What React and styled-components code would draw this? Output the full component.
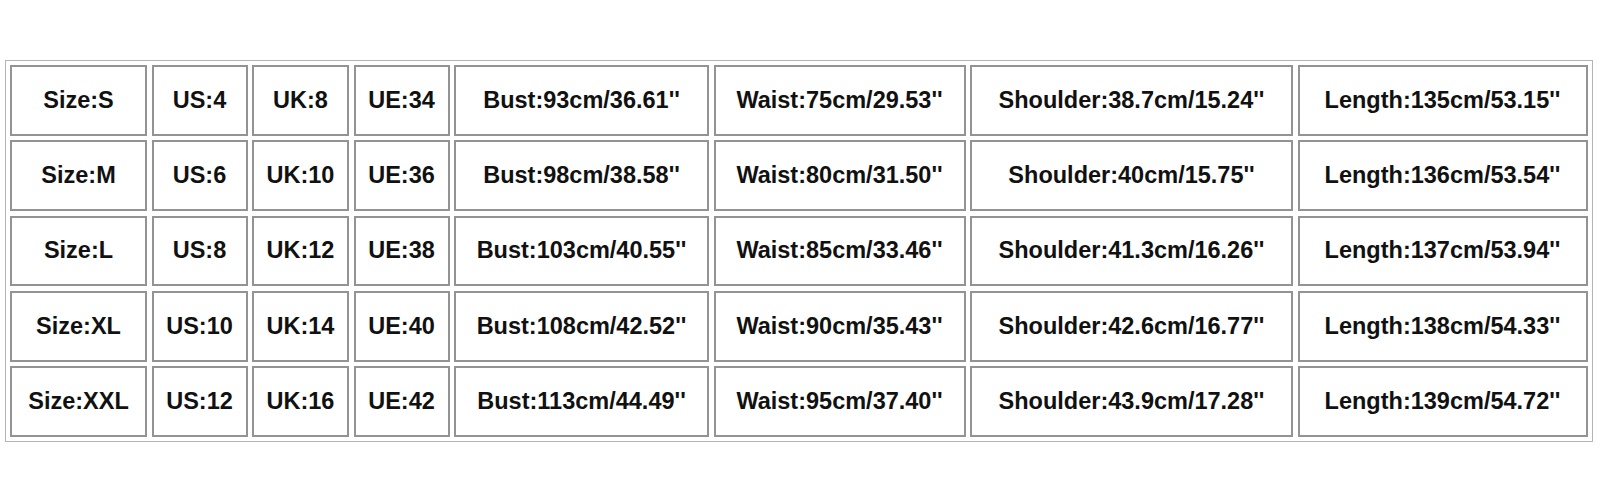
import React from "react";
import styled, { createGlobalStyle } from "styled-components";

const Global = createGlobalStyle`
  html, body { margin: 0; padding: 0; background: #ffffff; }
  body { font-family: "Liberation Sans", Arial, sans-serif; }
`;

const Table = styled.div`
  box-sizing: content-box;
  margin: 60px 0 0 5px;
  width: 1577.5px;
  border: 1px solid #b4b4b4;
  padding: 4px;
  display: grid;
  grid-template-columns: 137px 96px 97px 96px 255px 252px 323px 290px;
  grid-auto-rows: 70.8px;
  gap: 4.5px;
`;

const Cell = styled.div`
  box-sizing: border-box;
  border: 2px solid #939393;
  display: flex;
  align-items: center;
  justify-content: center;
  font-weight: bold;
  font-size: 23.5px;
  color: #111111;
  white-space: nowrap;
`;

const rows = [
  ["Size:S", "US:4", "UK:8", "UE:34", "Bust:93cm/36.61''", "Waist:75cm/29.53''", "Shoulder:38.7cm/15.24''", "Length:135cm/53.15''"],
  ["Size:M", "US:6", "UK:10", "UE:36", "Bust:98cm/38.58''", "Waist:80cm/31.50''", "Shoulder:40cm/15.75''", "Length:136cm/53.54''"],
  ["Size:L", "US:8", "UK:12", "UE:38", "Bust:103cm/40.55''", "Waist:85cm/33.46''", "Shoulder:41.3cm/16.26''", "Length:137cm/53.94''"],
  ["Size:XL", "US:10", "UK:14", "UE:40", "Bust:108cm/42.52''", "Waist:90cm/35.43''", "Shoulder:42.6cm/16.77''", "Length:138cm/54.33''"],
  ["Size:XXL", "US:12", "UK:16", "UE:42", "Bust:113cm/44.49''", "Waist:95cm/37.40''", "Shoulder:43.9cm/17.28''", "Length:139cm/54.72''"],
];

export default function App() {
  return (
    <>
      <Global />
      <Table>
        {rows.map((r, i) =>
          r.map((c, j) => <Cell key={`${i}-${j}`}>{c}</Cell>)
        )}
      </Table>
    </>
  );
}
